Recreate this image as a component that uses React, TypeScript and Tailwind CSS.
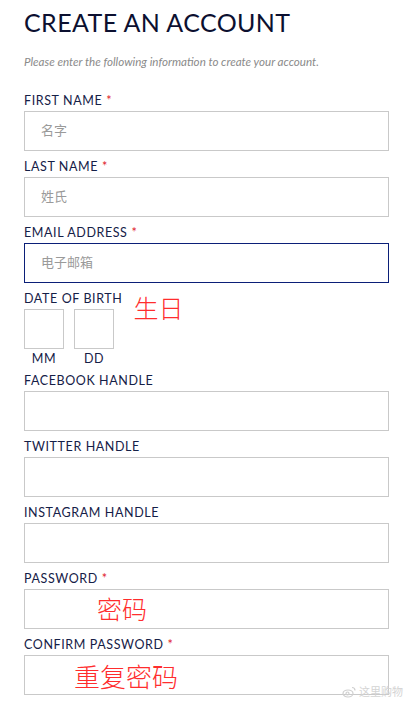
const label = "text-[12.5px] leading-[16px] tracking-[0.6px] text-[#152047] uppercase"

const Label = ({ text, required }: { text: string; required?: boolean }) => (
  <div className={label}>
    {text}
    {required && <span className="ml-[4px] text-[#e0202a]">*</span>}
  </div>
)

const Field = ({
  text,
  required,
  focused,
  children,
}: {
  text: string
  required?: boolean
  focused?: boolean
  children?: React.ReactNode
}) => (
  <div className="mb-[8px]">
    <Label text={text} required={required} />
    <div
      className={
        "mt-[2px] flex h-[40px] w-[365px] items-center border " +
        (focused ? "border-[#0b1f78]" : "border-[#c9c9c9]")
      }
    >
      {children}
    </div>
  </div>
)

const Placeholder = ({ text }: { text: string }) => (
  <span className="pl-[16px] text-[13px] text-[#9a9a9a]">{text}</span>
)

const red = "font-['Noto_Sans_CJK_SC',sans-serif] font-light text-[#ff2d2d]"

const App = () => {
  return (
    <div className="relative h-[706px] w-[409px] overflow-hidden bg-white pl-[24px] font-['Lato','Noto_Sans_CJK_SC',sans-serif]">
      <h1 className="pt-[7px] text-[25px] leading-[30px] font-normal tracking-[0.4px] text-[#0c1030]">
        CREATE AN ACCOUNT
      </h1>
      <p className="mt-[18px] text-[11.6px] leading-[14px] italic text-[#8a8a8a]">
        Please enter the following information to create your account.
      </p>

      <div className="mt-[24px]">
        <Field text="First Name" required>
          <Placeholder text="名字" />
        </Field>
        <Field text="Last Name" required>
          <Placeholder text="姓氏" />
        </Field>
        <Field text="Email Address" required focused>
          <Placeholder text="电子邮箱" />
        </Field>

        <div className="mb-[6px] flex">
          <div>
            <Label text="Date of Birth" />
            <div className="mt-[2px] flex gap-[10px]">
              <div className="flex flex-col items-center">
                <div className="h-[40px] w-[40px] border border-[#c9c9c9]" />
                <span className={label + " mt-[2px]"}>MM</span>
              </div>
              <div className="flex flex-col items-center">
                <div className="h-[40px] w-[40px] border border-[#c9c9c9]" />
                <span className={label + " mt-[2px]"}>DD</span>
              </div>
            </div>
          </div>
          <div className={red + " mt-[-1px] ml-[11px] text-[25px] leading-[34px]"}>生日</div>
        </div>

        <Field text="Facebook Handle" />
        <Field text="Twitter Handle" />
        <Field text="Instagram Handle" />
        <Field text="Password" required>
          <span className={red + " pl-[72px] text-[25px]"}>密码</span>
        </Field>
        <Field text="Confirm Password" required>
          <span className={red + " pl-[49px] text-[26px]"}>重复密码</span>
        </Field>
      </div>

      <div className="absolute right-[6px] bottom-[6px] flex items-center gap-[3px] text-[11px] text-[#d4d4d4]">
        <svg width="14" height="12" viewBox="0 0 14 12" fill="none" stroke="#cfcfcf" strokeWidth="1.2">
          <ellipse cx="6" cy="7.5" rx="5" ry="3.5" />
          <circle cx="5.5" cy="7.5" r="1.5" />
          <path d="M10 1.5a3 3 0 0 1 3 3" />
        </svg>
        <span>这里购物</span>
      </div>
    </div>
  )
}

export default App
